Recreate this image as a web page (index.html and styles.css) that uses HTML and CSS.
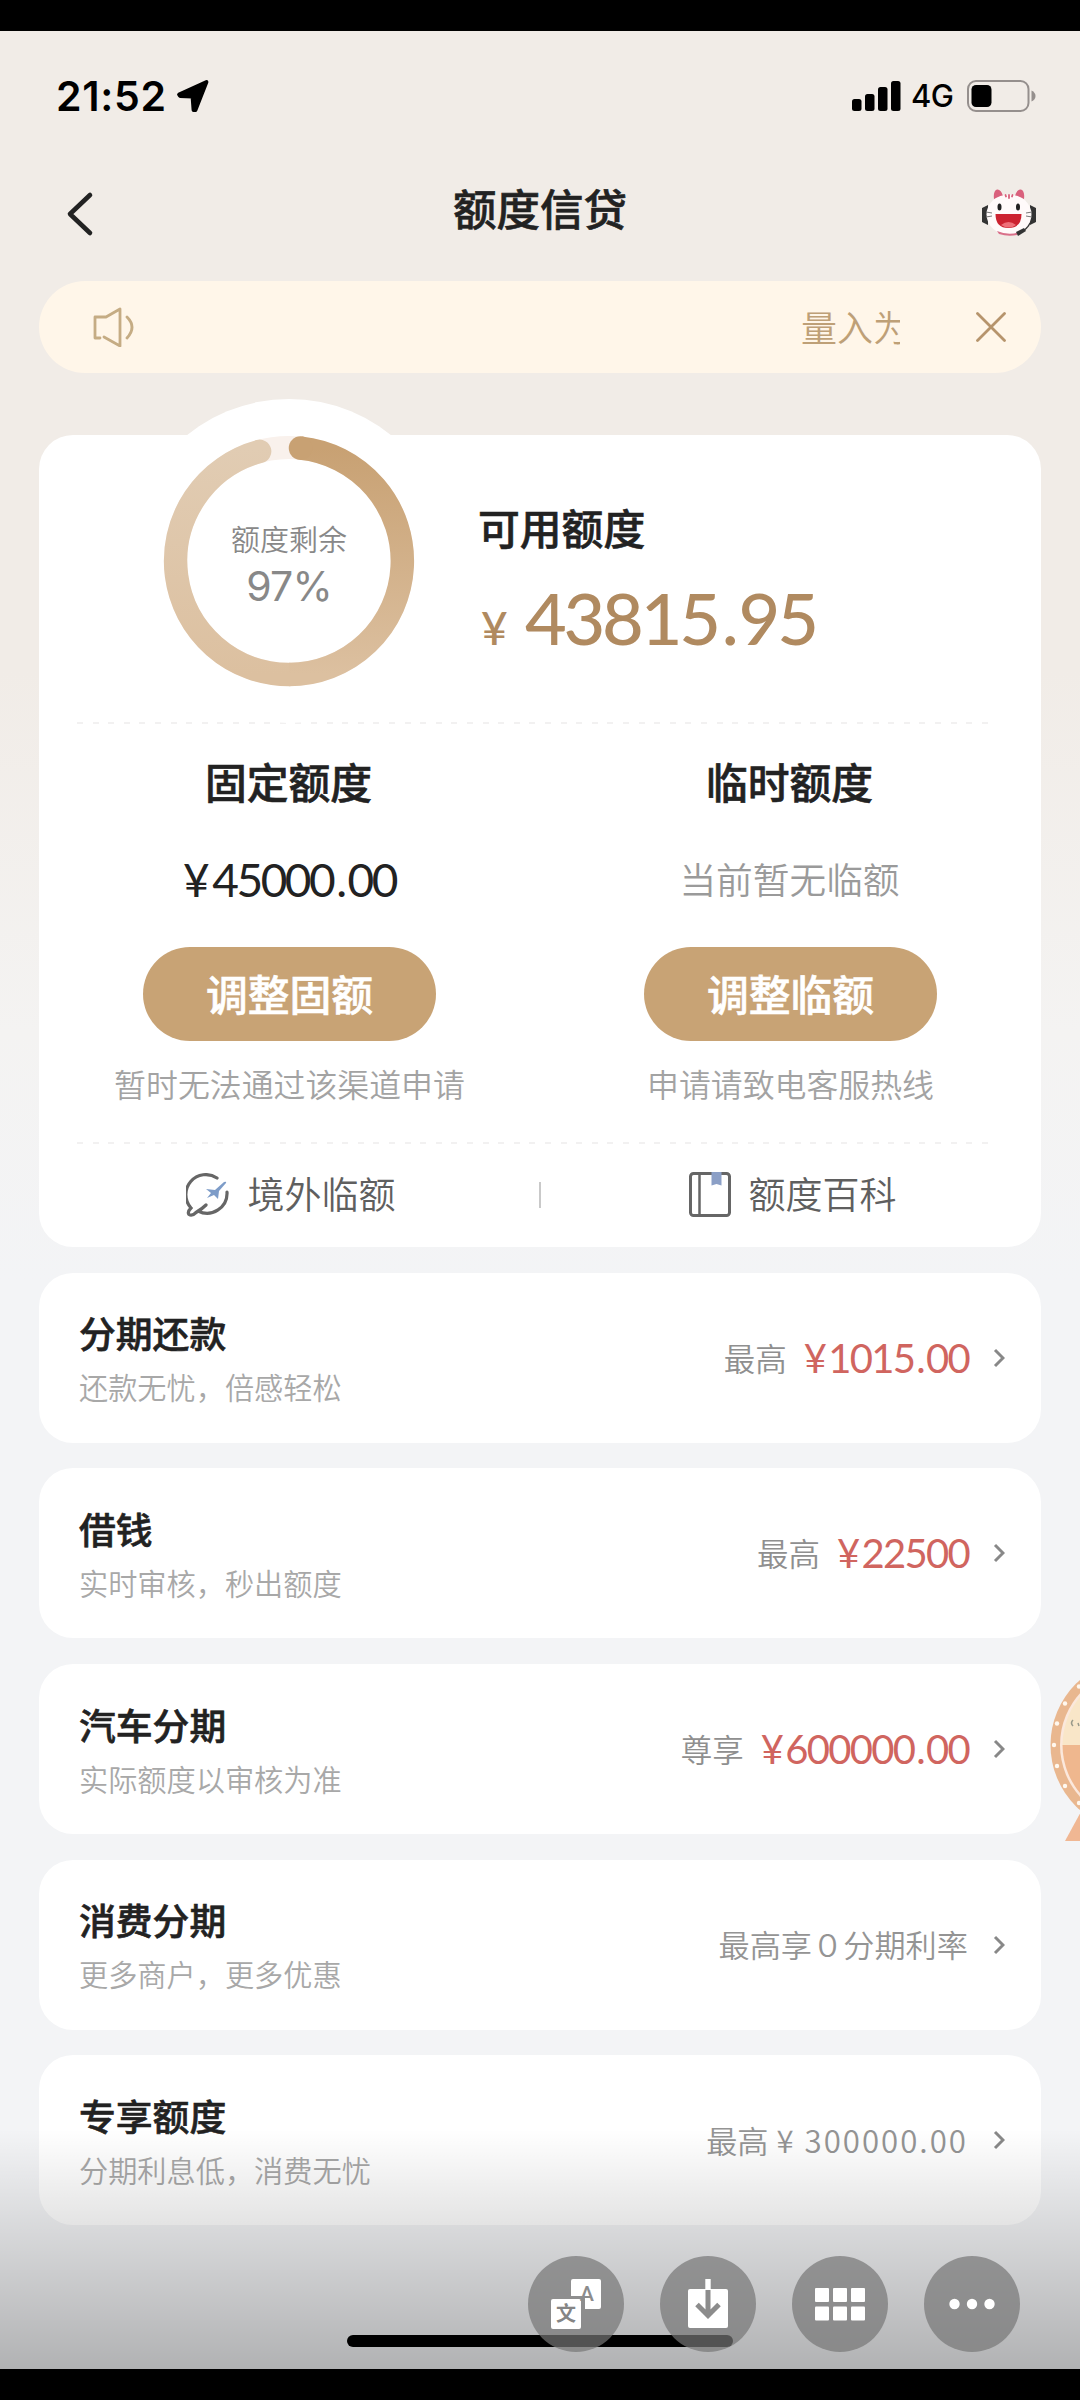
FILE: index.html
```html
<!DOCTYPE html>
<html lang="zh-CN">
<head>
<meta charset="utf-8">
<title>额度信贷</title>
<link rel="stylesheet" href="styles.css">
</head>
<body>
<div class="screen">
  <div class="status">
    <div class="status-left">
      <span class="clock">21:52</span>
      <svg width="34" height="34" viewBox="0 0 34 34"><path d="M3 15.500 30.500 3 19.500 31 17.500 31 16.500 17.500 4 17Z" fill="#000" stroke="#000" stroke-width="3.800" stroke-linejoin="round"/></svg>
    </div>
    <div class="status-right">
      <svg width="49" height="30" viewBox="0 0 49 30"><rect y="18" width="9.500" height="12" rx="2.500"/><rect x="13" y="13" width="9.500" height="17" rx="2.500"/><rect x="26" y="6" width="9.500" height="24" rx="2.500"/><rect x="39" width="9.500" height="30" rx="2.500"/></svg>
      <span class="net">4G</span>
      <svg width="70" height="32" viewBox="0 0 70 32"><rect x="1" y="1" width="60.500" height="30" rx="8" fill="none" stroke="#958f8d" stroke-width="2"/><rect x="4.500" y="5" width="20" height="22" rx="4.500"/><path d="M64.500 10.500q4 2 4 5.500t-4 5.500z" fill="#958f8d"/></svg>
    </div>
  </div>

  <div class="nav">
    <svg class="back" width="30" height="46" viewBox="0 0 30 46"><path d="M25 4 5 23 25 42" fill="none" stroke="#222" stroke-width="4.600" stroke-linecap="round" stroke-linejoin="round"/></svg>
    <h1>额度信贷</h1>
    <svg class="mascot" width="56" height="50" viewBox="0 0 56 50">
      <path d="M7 17 1 20v14l6 3zM49 17l6 3v14l-6 3z" fill="#333"/>
      <path d="M49 33q-3 8-12 12" fill="none" stroke="#333" stroke-width="3"/>
      <path d="M13 11Q12 3 16 1.500q4-.5 6 6.500zM43 11Q44 3 40 1.500q-4-.5-6 6.500z" fill="#d9607c"/>
      <ellipse cx="28" cy="26.500" rx="22.500" ry="20" fill="#fffafa"/>
      <path d="M16 43q12 5 22 1l-2 3q-9 2-18-1z" fill="#d9708a"/>
      <path d="M28 7v3M24.500 7l.5 1.500M31.500 7l-.5 1.500" stroke="#d9607c" stroke-width="1.800" stroke-linecap="round"/>
      <ellipse cx="18.500" cy="19" rx="2" ry="3.500" fill="#222"/><ellipse cx="37" cy="19" rx="2" ry="3.500" fill="#222"/>
      <path d="M14.500 26h26q0 14-13 14t-13-14z" fill="#cc2230"/><path d="M20 37q7.500-6 15 0-7 5-15 0z" fill="#ee6f78"/>
      <path d="M5 24l6 1M5 29l6-1M51 24l-6 1M51 29l-6-1" stroke="#777" stroke-width="1"/>
      <path d="m35 44 8-4 2 3-8 5z" fill="#333"/>
    </svg>
  </div>

  <div class="notice">
    <svg width="42" height="40" viewBox="0 0 42 40"><path d="M7 31H2V10h11L27 2v37L11 30" fill="none" stroke="#c5ac84" stroke-width="2.800" stroke-linejoin="round" stroke-linecap="round"/><path d="M34 10q10 10 0 21" fill="none" stroke="#c5ac84" stroke-width="2.800" stroke-linecap="round"/></svg>
    <div class="ticker">量入为</div>
    <svg width="30" height="30" viewBox="0 0 30 30"><path d="m1.500 1.500 27 27m0-27-27 27" stroke="#b6946c" stroke-width="2.800" stroke-linecap="round"/></svg>
  </div>

  <section class="card">
    <div class="summary">
      <div class="gauge">
        <svg width="324" height="324" viewBox="-162 -162 324 324">
          <defs>
            <linearGradient id="gr" gradientUnits="userSpaceOnUse" x1="0" y1="-113" x2="0" y2="113"><stop offset="0" stop-color="#c8a173"/><stop offset="1" stop-color="#dcc0a0"/></linearGradient>
            <linearGradient id="gl" gradientUnits="userSpaceOnUse" x1="0" y1="113" x2="0" y2="-113"><stop offset="0" stop-color="#dcc0a0"/><stop offset="1" stop-color="#e1ccb3"/></linearGradient>
          </defs>
          <circle r="162" fill="#fff"/>
          <circle r="113.500" fill="none" stroke="#f9f1ec" stroke-width="23"/>
          <path d="M0 113.500A113.500 113.500 0 0 1-29.400-109.600" fill="none" stroke="url(#gl)" stroke-width="23.500" stroke-linecap="round"/>
          <path d="M11.500-112.900A113.500 113.500 0 0 1 0 113.500" fill="none" stroke="url(#gr)" stroke-width="23.500"/>
          <circle cx="11.500" cy="-112.900" r="11.750" fill="#c8a173"/>
        </svg>
        <div class="gauge-text"><span class="gauge-label">额度剩余</span><span class="gauge-value">97%</span></div>
      </div>
      <div class="available">
        <h2>可用额度</h2>
        <p class="total"><span class="yen">¥</span>43815<span class="dot">.</span>95</p>
      </div>
    </div>
    <div class="dashes"></div>
    <div class="columns">
      <div class="col">
        <h2>固定额度</h2>
        <p class="fixed"><span class="sign">¥</span>45000<span class="dot">.</span>00</p>
        <button class="btn">调整固额</button>
        <p class="hint">暂时无法通过该渠道申请</p>
      </div>
      <div class="col">
        <h2>临时额度</h2>
        <p class="none">当前暂无临额</p>
        <button class="btn">调整临额</button>
        <p class="hint">申请请致电客服热线</p>
      </div>
    </div>
    <div class="dashes"></div>
    <div class="links">
      <div class="link">
        <svg width="44" height="44" viewBox="0 0 44 44"><path d="M31 5A20 20 0 0 0 5 35Q1 39 3 41.500q3 2 7-2Q16 36 20 32M41 19A20 20 0 0 1 12 38" fill="none" stroke="#666" stroke-width="3.200" stroke-linecap="round"/><path d="m40 10-7 8-1 8-4-4-7 3 4-5-5-4 9 1 9-8q3-1 2 1z" fill="#7d9cc8"/></svg>
        <span>境外临额</span>
      </div>
      <i class="bar"></i>
      <div class="link">
        <svg width="42" height="45" viewBox="0 0 42 45"><rect x="1.500" y="1.500" width="39" height="42" rx="3" fill="none" stroke="#666" stroke-width="3"/><path d="M10.500 2v41" stroke="#666" stroke-width="2.500"/><path d="M22.500 0h10v13.500l-5-1.500-5 1.500z" fill="#8b9fc6"/></svg>
        <span>额度百科</span>
      </div>
    </div>
  </section>

  <section class="row"><div class="row-main"><h3>分期还款</h3><p>还款无忧，倍感轻松</p></div><span class="tag">最高</span><span class="money"><span class="sign">¥</span>1015<span class="dot">.</span>00</span><svg class="go" width="12" height="20" viewBox="0 0 12 20"><path d="m2 2 8 8-8 8"/></svg></section>
  <section class="row"><div class="row-main"><h3>借钱</h3><p>实时审核，秒出额度</p></div><span class="tag">最高</span><span class="money"><span class="sign">¥</span>22500</span><svg class="go" width="12" height="20" viewBox="0 0 12 20"><path d="m2 2 8 8-8 8"/></svg></section>
  <section class="row"><div class="row-main"><h3>汽车分期</h3><p>实际额度以审核为准</p></div><span class="tag">尊享</span><span class="money"><span class="sign">¥</span>600000<span class="dot">.</span>00</span><svg class="go" width="12" height="20" viewBox="0 0 12 20"><path d="m2 2 8 8-8 8"/></svg></section>
  <section class="row"><div class="row-main"><h3>消费分期</h3><p>更多商户，更多优惠</p></div><span class="rate">最高享０分期利率</span><svg class="go" width="12" height="20" viewBox="0 0 12 20"><path d="m2 2 8 8-8 8"/></svg></section>
  <section class="row"><div class="row-main"><h3>专享额度</h3><p>分期利息低，消费无忧</p></div><span class="rate">最高<span class="limit">¥ 300000.00</span></span><svg class="go" width="12" height="20" viewBox="0 0 12 20"><path d="m2 2 8 8-8 8"/></svg></section>

  <svg class="wheel" width="32" height="170" viewBox="1048 1675 32 170">
    <path d="M1083 1808 1065 1841h18z" fill="#f0b793"/>
    <circle cx="1137" cy="1745" r="86.500" fill="#e9b78f"/>
    <circle cx="1137" cy="1745" r="77" fill="#fbe8dc"/>
    <path d="M1062.500 1745a74.500 74.500 0 0 1 149 0z" fill="#f9e6c8"/>
    <path d="M1062.500 1745a74.500 74.500 0 0 0 149 0z" fill="#efb78e"/>
    <path d="M1073 1720q-3 3 0 6m5-3 1 3" stroke="#99998a" stroke-width="1.500" fill="none"/>
    <g fill="#fff8ef"><circle cx="1054" cy="1745" r="2.200"/><circle cx="1057" cy="1723.500" r="2.200"/><circle cx="1065" cy="1703.500" r="2.200"/><circle cx="1079" cy="1686.500" r="2.200"/><circle cx="1057" cy="1766" r="2.200"/><circle cx="1065" cy="1786" r="2.200"/><circle cx="1079" cy="1803" r="2.200"/></g>
  </svg>

  <div class="shade"></div>
  <div class="home"></div>
  <div class="tools">
    <div class="tool"><svg width="96" height="96" viewBox="0 0 96 96"><path d="M45 23h26q2 0 2 2v26q0 2-2 2H57V43q0-3-3-3H43V25q0-2 2-2z" fill="#fff"/><rect x="23" y="43" width="30" height="30" rx="2" fill="#fff"/><text x="59" y="45" class="glyph-a">A</text><text x="38" y="65" class="glyph-w">文</text></svg></div>
    <div class="tool"><svg width="96" height="96" viewBox="0 0 96 96"><rect x="28" y="33" width="40" height="39" rx="2" fill="#fff"/><path d="M45.300 23h5.400v11h-5.400z" fill="#fff"/><path d="M48 34v25M37 48.500l11 11 11-11" fill="none" stroke="#8c8c8c" stroke-width="5"/></svg></div>
    <div class="tool"><svg width="96" height="96" viewBox="0 0 96 96"><g fill="#fff"><rect x="23" y="32" width="14" height="14" rx="1"/><rect x="41" y="32" width="14" height="14" rx="1"/><rect x="59" y="32" width="14" height="14" rx="1"/><rect x="23" y="50.500" width="14" height="14" rx="1"/><rect x="41" y="50.500" width="14" height="14" rx="1"/><rect x="59" y="50.500" width="14" height="14" rx="1"/></g></svg></div>
    <div class="tool"><svg width="96" height="96" viewBox="0 0 96 96"><g fill="#fff"><circle cx="30.500" cy="48" r="5.200"/><circle cx="48" cy="48" r="5.200"/><circle cx="65.500" cy="48" r="5.200"/></g></svg></div>
  </div>
</div>
</body>
</html>
```
FILE: styles.css
```css
* { box-sizing: border-box; }
body, h1, h2, h3, p { margin: 0; font-weight: 400; }
body { background: #000; font-family: "Noto Sans CJK SC", sans-serif; color: #222; }
svg { display: block; flex: none; }

.screen {
  position: relative;
  height: 2400px;
  padding: 0 39px;
  border-top: 31px solid #000;
  border-bottom: 31px solid #000;
  background: linear-gradient(#f1ece7 0, #f1ece7 640px, #f4f3f2 1000px, #f3f4f6 1250px);
  overflow: hidden;
  white-space: nowrap;
}

.status {
  display: flex;
  justify-content: space-between;
  align-items: center;
  height: 50px;
  margin-top: 40px;
  padding: 0 4px 0 17px;
}
.status-left, .status-right { display: flex; align-items: center; }
.status-left { gap: 8px; }
.clock { width: 112px; font: 600 41px/50px Inter, sans-serif; color: #000; letter-spacing: 0.7px; }
.net { width: 46px; margin: 0 10px; font: 500 31px/40px Inter, sans-serif; color: #000; letter-spacing: -0.5px; }

.nav {
  display: grid;
  grid-template-columns: 60px 1fr 60px;
  align-items: center;
  height: 70px;
  margin-top: 52px;
}
.back { margin: 12px 0 0 26px; }
h1 { text-align: center; font-size: 43.500px; line-height: 60px; font-weight: 500; -webkit-text-stroke: 0.6px; }
.mascot { margin: 9px 0 0; }

.notice {
  display: flex;
  align-items: center;
  height: 92px;
  margin-top: 38px;
  padding: 0 35px 0 54px;
  border-radius: 46px;
  background: #fff6e9;
}
.ticker {
  width: 99px;
  margin: -2px 76px 0 auto;
  overflow: hidden;
  font-size: 36px;
  line-height: 54px;
  font-weight: 350;
  color: #bea077;
}

.card {
  height: 812px;
  margin-top: 62px;
  border-radius: 34px;
  background: #fff;
}
.summary { display: flex; padding-left: 88px; height: 287px; }
.gauge { display: grid; width: 324px; height: 324px; margin-top: -36px; }
.gauge > * { grid-area: 1 / 1; }
.gauge-text { display: flex; flex-direction: column; align-items: center; padding-top: 117px; color: #888; }
.gauge-label { font-size: 29px; line-height: 44px; font-weight: 350; }
.gauge-value { font: 400 41px/50px Inter, sans-serif; letter-spacing: -0.8px; margin-top: 1px; }
.available { padding: 67px 0 0 27px; }
h2 { font-size: 41.800px; line-height: 50px; font-weight: 500; -webkit-text-stroke: 0.6px; }
.total {
  display: flex;
  align-items: baseline;
  margin-top: 25px;
  font: 500 72px/80px Lato, sans-serif;
  letter-spacing: -3.200px;
  color: #b08a60;
}
.total .dot { margin: 0 3px 0 4px; }
.yen { width: 47px; padding-left: 3px; font-size: 46px; letter-spacing: 0; }

.dashes {
  height: 2px;
  margin: 0 48px 0 38px;
  background: repeating-linear-gradient(90deg, #f2f1f1 0 6px, transparent 6px 15.600px);
}

.columns { display: grid; grid-template-columns: 1fr 1fr; height: 418px; }
.col { display: flex; flex-direction: column; align-items: center; padding-top: 32px; }
.col h2 { margin-right: 2px; }
.fixed, .none { height: 60px; margin: 44px 0 37px; line-height: 60px; }
.fixed { font-family: Lato, sans-serif; font-size: 46px; letter-spacing: -2.500px; }
.fixed .sign { margin-right: 5px; }
.fixed .dot { margin: 0 3px; }
.none { padding-right: 2px; font-size: 36.700px; line-height: 56px; font-weight: 350; color: #9a9a9a; }
.btn {
  width: 293px;
  height: 94px;
  padding: 0 0 2px;
  border: 0;
  border-radius: 47px;
  background: #c8a375;
  color: #fff;
  font: 500 41.800px/60px "Noto Sans CJK SC", sans-serif;
  -webkit-text-stroke: 0.6px;
}
.hint { margin-top: 22px; font-size: 31.900px; line-height: 40px; font-weight: 350; color: #a3a3a3; }

.links { display: grid; grid-template-columns: 1fr 2px 1fr; align-items: center; height: 101px; }
.link { display: flex; justify-content: center; align-items: center; gap: 18px; padding-left: 3px; font-size: 37px; line-height: 50px; font-weight: 350; color: #5f5f5f; }
.link span { margin-top: -3px; }
.bar { height: 26px; background: #c9c9c9; }

.row {
  display: flex;
  align-items: center;
  height: 170px;
  margin-top: 25.700px;
  padding: 0 36px 0 40px;
  border-radius: 34px;
  background: #fff;
}
.row-main { flex: 1; margin-top: -1px; }
h3 { font-size: 36.800px; line-height: 44px; font-weight: 500; -webkit-text-stroke: 0.6px; }
.row-main p { margin-top: 14px; font-size: 29.200px; line-height: 36px; font-weight: 350; color: #a8a8a8; }
.tag { margin: -2px 17px 0 0; font-size: 31.500px; line-height: 46px; font-weight: 350; color: #8f8f8f; }
.money { font: 400 40px/46px Lato, sans-serif; letter-spacing: -1.700px; color: #d0655f; margin-right: -1px; }
.money .sign { margin-right: 3px; }
.money .dot { margin: 0 2px; }
.rate { margin-top: -1px; font-size: 31.200px; line-height: 46px; font-weight: 350; color: #949494; }
.limit { margin-left: 8px; letter-spacing: 2px; }
.go { margin-left: 25px; fill: none; stroke: #888; stroke-width: 3; }

.wheel { position: absolute; left: 1048px; top: 1644px; }
.shade { position: absolute; inset: auto 0 0 0; height: 240px; background: linear-gradient(rgba(0,0,0,0), rgba(0,0,0,.27)); }
.home { position: absolute; left: 347px; bottom: 22px; width: 386px; height: 12px; border-radius: 6px; background: #000; }
.tools { position: absolute; right: 60px; bottom: 17px; display: flex; gap: 36px; }
.tool { width: 96px; height: 96px; border-radius: 50%; background: rgba(118,118,118,.7); }
.glyph-a { font: 500 21px Roboto, sans-serif; text-anchor: middle; fill: #8c8c8c; }
.glyph-w { font: 700 20px "Noto Sans CJK SC", sans-serif; text-anchor: middle; fill: #858585; }
```
